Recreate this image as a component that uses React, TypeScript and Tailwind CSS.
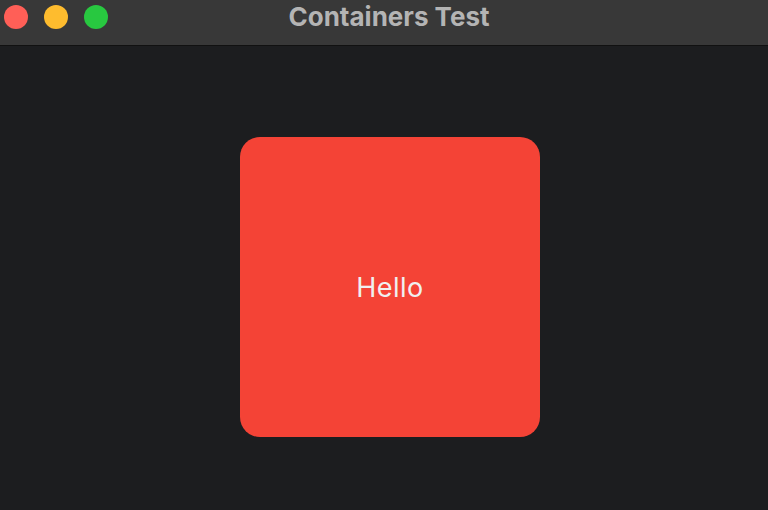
export default function App() {
  return (
    <div className="w-[768px] h-[510px] flex flex-col bg-[#1c1d1f] overflow-hidden" style={{ fontFamily: 'Inter, "Noto Sans", sans-serif' }}>
      <div className="relative h-[45px] shrink-0 bg-[#383838] border-b border-[#111111] box-content flex items-center justify-center">
        <div className="absolute left-[4px] top-[5px] flex gap-[16px]">
          <div className="w-[24px] h-[24px] rounded-full bg-[#ff5f57]" />
          <div className="w-[24px] h-[24px] rounded-full bg-[#febc2e]" />
          <div className="w-[24px] h-[24px] rounded-full bg-[#28c840]" />
        </div>
        <div className="text-[26px] font-bold text-[#b4b4b4] leading-none ml-[10px] mb-[11px]">Containers Test</div>
      </div>
      <div className="flex-1 pt-[91px] pl-[240px]">
        <div className="w-[300px] h-[300px] rounded-[20px] bg-[#f44336] flex items-center justify-center">
          <span className="text-[27px] tracking-[0.5px] text-[#f0f0f0] leading-none">Hello</span>
        </div>
      </div>
    </div>
  );
}
